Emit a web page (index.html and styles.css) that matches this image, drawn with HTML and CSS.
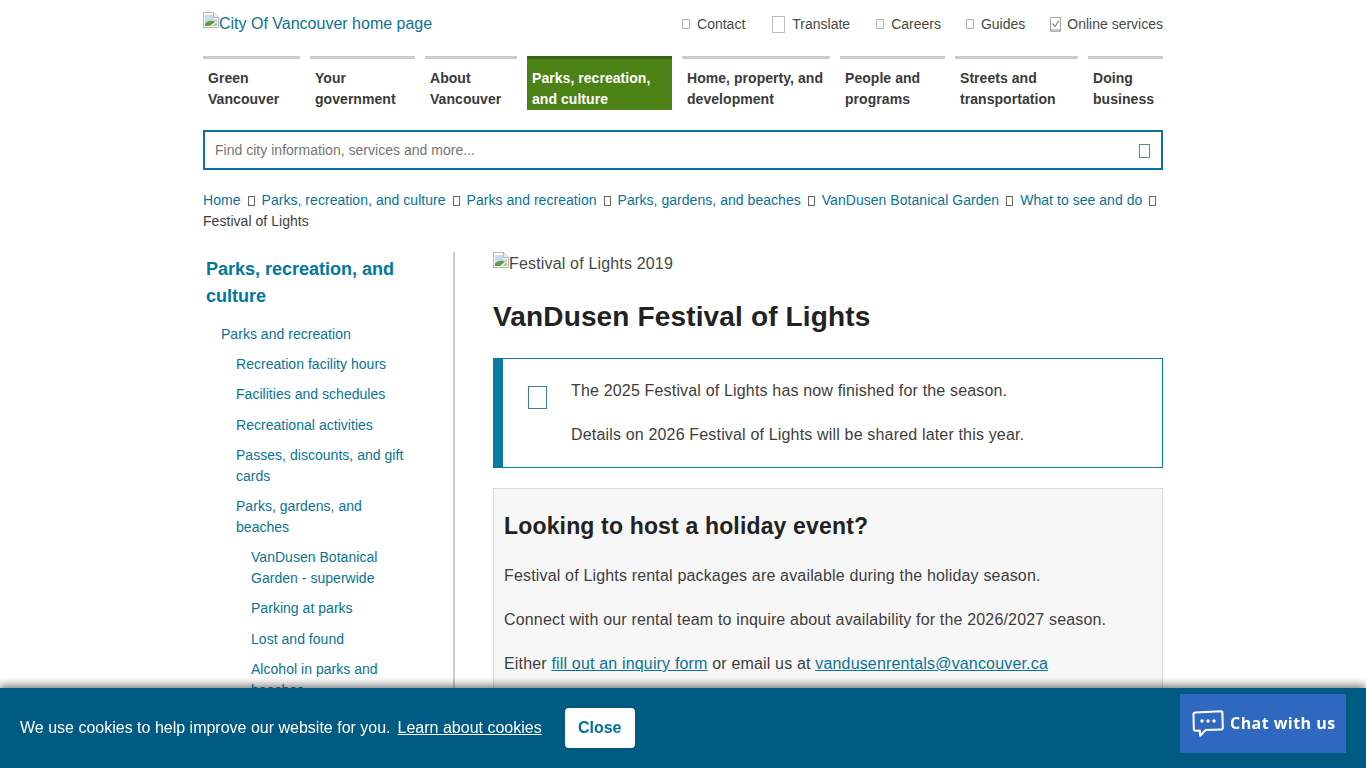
FILE: index.html
```html
<!DOCTYPE html>
<html lang="en">
<head>
<meta charset="utf-8">
<title>VanDusen Festival of Lights</title>
<link rel="stylesheet" href="styles.css">
</head>
<body>
<div class="page">
  <header class="top">
    <a class="logo" href="#"><svg class="broken" viewBox="0 0 16 16"><path d="M.5.5h10l5 5v10H.5z" fill="#fff" stroke="#b4b4b4"/><path d="M10.500.5v5h5" fill="#eee" stroke="#b4b4b4"/><path d="M2 3h8v4h4v3L2 12z" fill="#c9d9ee"/><path d="M2 14v-2.500C5 8.500 9 8 12 10l-5 4z" fill="#5f9e45"/><path d="M9 14l5-4v4z" fill="#a8cc8e"/></svg>City Of Vancouver home page</a>
    <ul class="util">
      <li class="u1"><span class="tofu t-sm"></span>Contact</li>
      <li class="u2"><span class="tofu t-lg"></span>Translate</li>
      <li class="u3"><span class="tofu t-sm"></span>Careers</li>
      <li class="u4"><span class="tofu t-sm"></span>Guides</li>
      <li class="u5"><svg class="check" viewBox="0 0 11 15"><path d="M.5.500h10v14H.5z" fill="#fff" stroke="#a5a5a5"/><path d="M1 12h9v2.500H1z" fill="#c4c4c4"/><path d="M2.500 6.500l2.500 3 4-6" fill="none" stroke="#8c8c8c" stroke-width="1.200"/></svg>Online services</li>
    </ul>
  </header>
  <nav class="nav">
    <a href="#">Green<br>Vancouver</a>
    <a href="#">Your<br>government</a>
    <a href="#">About<br>Vancouver</a>
    <a href="#" class="on">Parks, recreation,<br>and culture</a>
    <a href="#">Home, property, and<br>development</a>
    <a href="#">People and<br>programs</a>
    <a href="#">Streets and<br>transportation</a>
    <a href="#">Doing<br>business</a>
  </nav>
  <form class="search">
    <span class="ph">Find city information, services and more...</span>
    <span class="tofu t-search"></span>
  </form>
  <div class="crumbs">
    <a href="#">Home</a><span class="tofu t-sep"></span><a href="#">Parks, recreation, and culture</a><span class="tofu t-sep"></span><a href="#">Parks and recreation</a><span class="tofu t-sep"></span><a href="#">Parks, gardens, and beaches</a><span class="tofu t-sep"></span><a href="#">VanDusen Botanical Garden</a><span class="tofu t-sep"></span><a href="#">What to see and do</a><span class="tofu t-sep t-last"></span><br>Festival of Lights
  </div>
  <div class="cols">
    <aside class="side">
      <h2 class="side-title"><a href="#">Parks, recreation, and culture</a></h2>
      <ul class="tree">
        <li class="l1"><a href="#">Parks and recreation</a></li>
        <li class="l2"><a href="#">Recreation facility hours</a></li>
        <li class="l2"><a href="#">Facilities and schedules</a></li>
        <li class="l2"><a href="#">Recreational activities</a></li>
        <li class="l2"><a href="#">Passes, discounts, and gift cards</a></li>
        <li class="l2"><a href="#">Parks, gardens, and beaches</a></li>
        <li class="l3"><a href="#">VanDusen Botanical Garden - superwide</a></li>
        <li class="l3"><a href="#">Parking at parks</a></li>
        <li class="l3"><a href="#">Lost and found</a></li>
        <li class="l3"><a href="#">Alcohol in parks and beaches</a></li>
      </ul>
    </aside>
    <main class="main">
      <div class="hero"><svg class="broken" viewBox="0 0 16 16"><path d="M.5.5h10l5 5v10H.5z" fill="#fff" stroke="#b4b4b4"/><path d="M10.500.5v5h5" fill="#eee" stroke="#b4b4b4"/><path d="M2 3h8v4h4v3L2 12z" fill="#c9d9ee"/><path d="M2 14v-2.500C5 8.500 9 8 12 10l-5 4z" fill="#5f9e45"/><path d="M9 14l5-4v4z" fill="#a8cc8e"/></svg>Festival of Lights 2019</div>
      <h1>VanDusen Festival of Lights</h1>
      <section class="notice">
        <span class="tofu t-notice"></span>
        <div class="notice-body">
          <p>The 2025 Festival of Lights has now finished for the season.</p>
          <p>Details on 2026 Festival of Lights will be shared later this year.</p>
        </div>
      </section>
      <section class="card">
        <h2>Looking to host a holiday event?</h2>
        <p>Festival of Lights rental packages are available during the holiday season.</p>
        <p>Connect with our rental team to inquire about availability for the 2026/2027 season.</p>
        <p>Either <a href="#">fill out an inquiry form</a> or email us at <a href="#">vandusenrentals@vancouver.ca</a></p>
      </section>
    </main>
  </div>
</div>
<div class="cookie">
  <span class="cookie-msg">We use cookies to help improve our website for you.</span>
  <a class="cookie-link" href="#">Learn about cookies</a>
  <button class="cookie-close" type="button">Close</button>
  <button class="chat" type="button"><svg class="chat-ico" viewBox="0 0 32 28"><path d="M3.500 2.600 28.800 1.200c1 0 1.600.6 1.600 1.400l.4 15.400c0 .9-.6 1.500-1.400 1.500l-15.900.6-5.300 5.600-.4-5.200-4.500.2c-.9 0-1.500-.6-1.500-1.400L1.500 4.100c0-.9.900-1.400 2-1.500z" fill="none" stroke="#fff" stroke-width="2" stroke-linejoin="round"/><circle cx="10" cy="11" r="1.700" fill="#fff"/><circle cx="16" cy="11" r="1.700" fill="#fff"/><circle cx="22" cy="11" r="1.700" fill="#fff"/></svg>Chat with us</button>
</div>
</body>
</html>
```
FILE: styles.css
```css
* { box-sizing: border-box; }
html, body { margin: 0; height: 768px; overflow: hidden; }
body { font-family: "Liberation Sans", Arial, sans-serif; color: #3d3d3d; background: #fff; font-size: 16px; }
a { color: #0a7396; text-decoration: none; }
ul { list-style: none; margin: 0; padding: 0; }
p { margin: 0; }
.page { width: 960px; margin: 0 auto; }
.top { display: flex; justify-content: space-between; align-items: flex-start; height: 56px; padding-top: 12px; }
.logo { font-size: 16px; line-height: 24px; display: flex; align-items: flex-start; height: 24px; }
.broken { width: 16px; height: 16px; flex: none; }
.util { display: flex; font-size: 14px; line-height: 24px; color: #484848; }
.util li { display: flex; align-items: center; }
.u1 { margin-right: 27px; }
.u2 { margin-right: 26px; }
.u3 { margin-right: 25px; }
.u4 { margin-right: 25px; }
.tofu { display: inline-block; border: 1px solid #aaa; flex: none; }
.t-sm { width: 8px; height: 10px; margin-right: 7px; border-color: #bbb; }
.t-lg { width: 13px; height: 17px; margin-right: 7px; margin-top: 1px; border-color: #bbb; }
.check { width: 11px; height: 15px; margin-right: 6px; }
.nav { display: grid; grid-template-columns: 97px 105px 92px 145px 148px 105px 123px 75px; column-gap: 10px; height: 54px; }
.nav a { border-top: 3px solid #ccc; padding: 9px 0 0 5px; font-weight: 700; font-size: 14px; line-height: 21px; color: #3a3a3a; letter-spacing: .05px; white-space: nowrap; }
.nav a.on { background: #4d8216; border-top-color: #3c6213; color: #fff; }
.search { margin-top: 20px; height: 40px; border: 2px solid #0f6f9f; display: flex; align-items: center; justify-content: space-between; padding: 0 11px 0 10px; }
.ph { font-size: 14px; color: #757575; letter-spacing: .02px; }
.t-search { width: 11px; height: 14px; border-color: #3f93b5; margin-top: 2px; }
.crumbs { margin-top: 20px; font-size: 14px; line-height: 21px; letter-spacing: .04px; }
.t-sep { width: 7px; height: 10px; margin: 0 7px; border-color: #666; vertical-align: -1px; }
.t-last { margin-right: 0; }
.cols { display: flex; margin-top: 20px; }
.side { width: 252px; height: 500px; border-right: 2px solid #ccc; padding: 4px 40px 0 3px; flex: none; }
.side-title { margin: 0; font-size: 18px; line-height: 27px; font-weight: 700; }
.side-title a { color: #00779e; }
.tree { margin-top: 14px; font-size: 14px; line-height: 21px; letter-spacing: .03px; }
.tree li { margin-bottom: 9.2px; }
.l1 { padding-left: 15px; }
.l2 { padding-left: 30px; }
.l3 { padding-left: 45px; }
.main { margin-left: 38px; width: 670px; flex: none; }
.hero { display: flex; height: 24px; line-height: 24px; font-size: 16px; color: #484848; letter-spacing: .17px; }
h1 { margin: 24px 0 0; font-size: 28px; line-height: 34px; font-weight: 700; color: #222; letter-spacing: .15px; }
.notice { margin-top: 24px; height: 110px; border: 1px solid #0a7aa5; border-left-width: 10px; display: flex; padding: 21px 0 0 25px; }
.t-notice { width: 19px; height: 23px; margin-top: 6px; border-color: #3d7f99; }
.notice-body { margin-left: 24px; }
.notice-body p { line-height: 22px; margin-bottom: 22px; letter-spacing: .17px; }
.card { margin-top: 20px; height: 280px; background: #f7f7f7; border: 1px solid #ddd; padding: 22px 10px; }
.card h2 { margin: 0 0 24px; font-size: 23px; line-height: 30px; font-weight: 700; color: #222; letter-spacing: .16px; }
.card p { line-height: 22px; margin-bottom: 22px; letter-spacing: .17px; }
.card a { text-decoration: underline; }
.cookie { position: fixed; left: 0; right: 0; bottom: 0; height: 80px; background: #005a82; box-shadow: 0 -3px 8px rgba(0,0,0,.5); color: #fff; display: flex; align-items: center; padding-left: 20px; font-size: 16px; }
.cookie-link { color: #fff; text-decoration: underline; margin-left: 7px; }
.cookie-close { margin-left: 23px; width: 70px; height: 40px; border: 0; border-radius: 4px; background: #fff; color: #00719a; font: 700 16px "Liberation Sans", Arial, sans-serif; padding: 0; }
.chat { position: absolute; right: 20px; top: 6px; width: 166px; height: 59px; border: 0; background: #2f68bf; color: #fff; font: 700 16px "Open Sans", sans-serif; letter-spacing: .45px; display: flex; align-items: center; padding: 0 0 2px 12px; white-space: nowrap; }
.chat-ico { width: 32px; height: 28px; margin-right: 6px; margin-top: 2px; }
```
